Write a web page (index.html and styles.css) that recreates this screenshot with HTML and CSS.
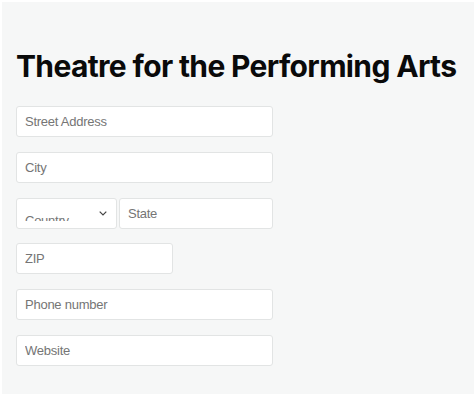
FILE: index.html
```html
<!DOCTYPE html>
<html lang="en">
<head>
    <meta charset="UTF-8">
    <meta name="viewport" content="width=device-width, initial-scale=1.0">
    <title>Theatre for the Performing Arts</title>
    <link rel="stylesheet" href="styles.css">
</head>
<body>
    <div class="venue-card">
        <h1>Theatre for the Performing Arts</h1>

        <form class="address-form">
            <input class="field" type="text" placeholder="Street Address">
            <input class="field" type="text" placeholder="City">

            <div class="field-row">
                <div class="select-wrap">
                    <select class="field field-select">
                        <option>Country</option>
                    </select>
                    <svg class="chevron" width="8" height="5" viewBox="0 0 8 5">
                        <path d="M0.7 0.7l3.3 3.3 3.3-3.3" fill="none" stroke="#444" stroke-width="1.2"/>
                    </svg>
                </div>
                <input class="field field-state" type="text" placeholder="State">
            </div>

            <input class="field field-zip" type="text" placeholder="ZIP">
            <input class="field" type="tel" placeholder="Phone number">
            <input class="field" type="url" placeholder="Website">
        </form>
    </div>
</body>
</html>
```

FILE: styles.css
```css
body {
    margin: 0;
    background-color: #fff;
    font-family: 'Liberation Sans', Arial, sans-serif;
    color: #111;
}

.venue-card {
    margin: 2px 0 4px 2px;
    padding: 44px 14px 28px;
    background-color: #f6f7f7;
}

h1 {
    font-family: 'Inter', sans-serif;
    font-size: 30px;
    line-height: 40px;
    font-weight: 700;
    letter-spacing: -0.65px;
    white-space: nowrap;
    margin: 0 0 20px;
    color: #0a0a0a;
}

.address-form {
    display: flex;
    flex-direction: column;
    align-items: flex-start;
    gap: 15px;
    width: 257px;
}

.field {
    box-sizing: border-box;
    width: 257px;
    height: 31px;
    padding: 0 8px;
    border: 1px solid #e2e4e4;
    border-radius: 3px;
    background-color: #fff;
    font-family: 'Liberation Sans', Arial, sans-serif;
    font-size: 13px;
    letter-spacing: -0.25px;
    color: #757575;
    outline: none;
}

.field::placeholder {
    color: #757575;
}

.field-row {
    display: flex;
    gap: 2px;
    width: 257px;
    height: 31px;
    margin-bottom: -1px;
}

.select-wrap {
    position: relative;
    width: 101px;
    height: 31px;
    flex: none;
}

.field-select {
    display: block;
    width: 101px;
    appearance: none;
    -webkit-appearance: none;
    padding: 15px 8px 7px;
    line-height: 14px;
}

.field-state {
    width: 154px;
}

.chevron {
    position: absolute;
    right: 10px;
    top: 13px;
}

.field-zip {
    width: 157px;
}
```
